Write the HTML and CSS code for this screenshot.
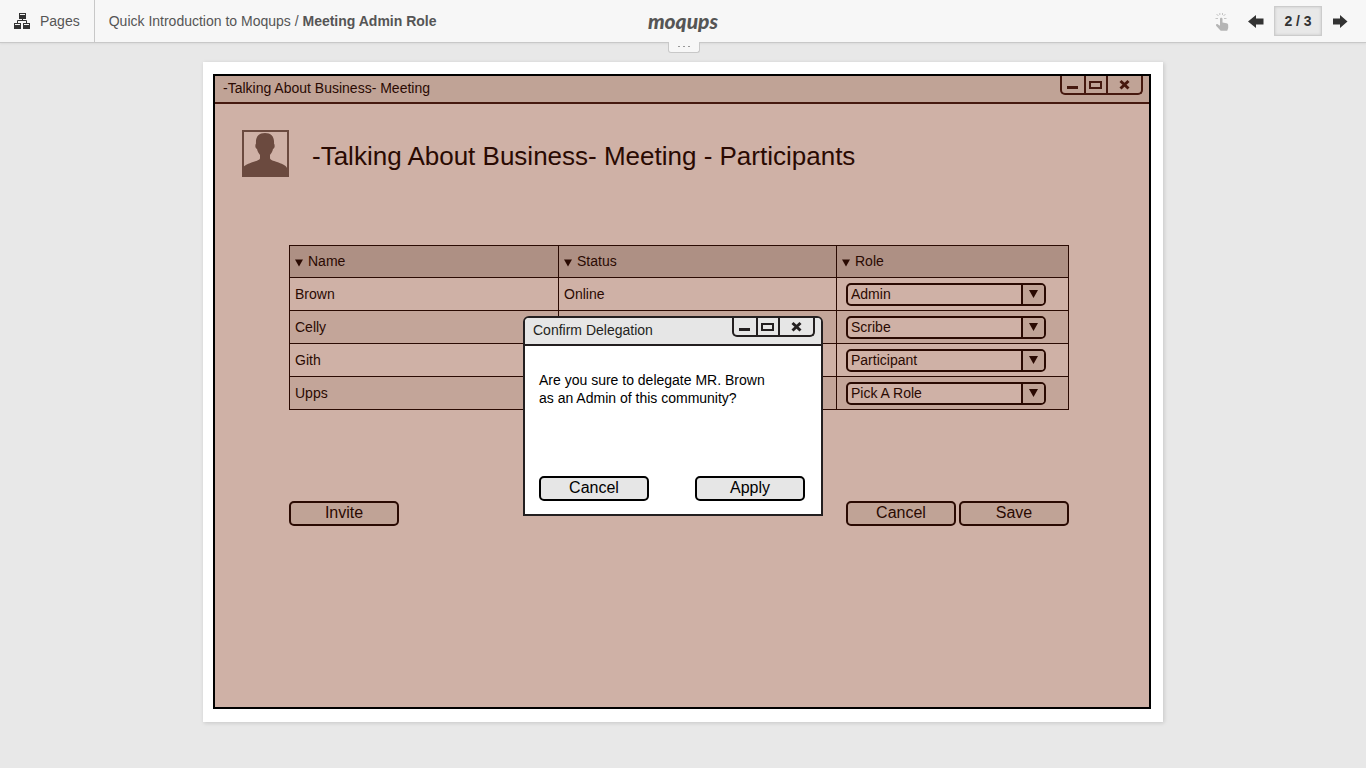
FILE: index.html
```html
<!DOCTYPE html>
<html lang="en">
<head>
<meta charset="utf-8">
<title>Meeting Admin Role</title>
<link rel="stylesheet" href="styles.css">
</head>
<body>
<svg class="defs" aria-hidden="true">
  <symbol id="minimise" viewBox="0 0 22 17"><path d="M5 10h11v3H5z" fill="currentColor"/></symbol>
  <symbol id="maximise" viewBox="0 0 20 17"><path d="M4 6h11v6H4z" fill="none" stroke="currentColor" stroke-width="2"/></symbol>
  <symbol id="close" viewBox="0 0 33 17"><path d="M12.500 5l8 7.500M20.500 5l-8 7.500" fill="none" stroke="currentColor" stroke-width="3"/></symbol>
  <symbol id="down" viewBox="0 0 9 8"><path d="M0 0h9L4.500 8z" fill="currentColor"/></symbol>
</svg>

<header class="topbar">
  <div class="topbar-left">
    <button class="pages" type="button">
      <svg width="16" height="16" viewBox="0 0 16 16"><path d="M5 0h7v6H5zM0 10h7v6H0zM9 10h7v6H9z" fill="#333"/><path d="M6 1h5v1H6zM1 11h5v1H1zM10 11h5v1h-5z" fill="#f7f7f7"/><path d="M8.500 6v2M3.500 10V7.500h9V10" fill="none" stroke="#333"/></svg>
      Pages
    </button>
    <nav class="crumbs">Quick Introduction to Moqups / <strong>Meeting Admin Role</strong></nav>
  </div>
  <a class="logo" href="#">moqups</a>
  <div class="topbar-right">
    <button class="tool hotspots" type="button" aria-label="Show hotspots">
      <svg width="16" height="19" viewBox="0 0 16 19"><path d="M6 7c0-1.600 2.500-1.600 2.500 0v3.500l4 .8c1.200.3 1.700.8 1.700 2V16l-1 2.800H6.700L2.300 14c-1-1.500.4-2.600 1.700-1.600l2 1.400z" fill="#b5b5b5"/><path d="M1.500 6.500H4M10 6.500h2.500M2.500 2l2 2M11.500 2l-2 2M5.800 1v2M8.500 1v2" fill="none" stroke="#c4c4c4"/></svg>
    </button>
    <button class="tool" type="button" aria-label="Previous page">
      <svg width="16" height="14" viewBox="0 0 16 14"><path d="M0 7.500L8 1v3.500h7.500v6H8V14z" fill="#333"/></svg>
    </button>
    <button class="counter" type="button">2 / 3</button>
    <button class="tool" type="button" aria-label="Next page">
      <svg width="16" height="14" viewBox="0 0 16 14"><path d="M15.500 7.500L8 1v3.500H1v6h7V14z" fill="#333"/></svg>
    </button>
  </div>
  <button class="handle" type="button" aria-label="Toggle toolbar"><svg width="12" height="2" viewBox="0 0 12 2"><path d="M0 0h2v1H0zM5 0h2v1H5zM10 0h2v1h-2z" fill="#999"/></svg></button>
</header>

<main class="sheet">
  <section class="window">
    <div class="titlebar">
      <span>-Talking About Business- Meeting</span>
      <div class="controls">
        <button type="button" aria-label="Minimise"><svg width="22" height="17"><use href="#minimise"/></svg></button>
        <button type="button" aria-label="Maximise"><svg width="20" height="17"><use href="#maximise"/></svg></button>
        <button type="button" aria-label="Close"><svg width="33" height="17"><use href="#close"/></svg></button>
      </div>
    </div>
    <div class="content">
      <div class="heading">
        <svg class="avatar" width="47" height="47" viewBox="0 0 47 47"><path d="M1 1h45v45H1z" fill="none" stroke="#6b4a3f" stroke-width="2"/><path d="M1 47V38c1-3 6-4.500 10-6 4-1.300 7-2 7-4v-3c-1.500-2-2.500-3.500-3-6-2-1-2-4-1-5.500C13.500 6.500 17 3 23 3s9.500 3.500 9 10.500c1 1.500 1 4.500-1 5.500-.5 2.500-1.500 4-3 6v3c0 2 3 2.700 7 4 4 1.500 9 3 10 6v9z" fill="#6b4a3f"/></svg>
        <h1>-Talking About Business- Meeting - Participants</h1>
      </div>
      <div class="panel">
        <table class="people">
          <colgroup><col class="col-name"><col class="col-status"><col class="col-role"></colgroup>
          <thead>
            <tr>
              <th scope="col"><svg width="8" height="8"><use href="#down"/></svg>Name</th>
              <th scope="col"><svg width="8" height="8"><use href="#down"/></svg>Status</th>
              <th scope="col"><svg width="8" height="8"><use href="#down"/></svg>Role</th>
            </tr>
          </thead>
          <tbody>
            <tr><td>Brown</td><td>Online</td><td><label class="picker"><select aria-label="Role of Brown"><option>Admin</option></select><span class="picker-arrow"><svg width="9" height="8"><use href="#down"/></svg></span></label></td></tr>
            <tr><td>Celly</td><td></td><td><label class="picker"><select aria-label="Role of Celly"><option>Scribe</option></select><span class="picker-arrow"><svg width="9" height="8"><use href="#down"/></svg></span></label></td></tr>
            <tr><td>Gith</td><td></td><td><label class="picker"><select aria-label="Role of Gith"><option>Participant</option></select><span class="picker-arrow"><svg width="9" height="8"><use href="#down"/></svg></span></label></td></tr>
            <tr><td>Upps</td><td></td><td><label class="picker"><select aria-label="Role of Upps"><option>Pick A Role</option></select><span class="picker-arrow"><svg width="9" height="8"><use href="#down"/></svg></span></label></td></tr>
          </tbody>
        </table>
        <div class="actions">
          <button class="btn" type="button">Invite</button>
          <div class="actions-end">
            <button class="btn" type="button">Cancel</button>
            <button class="btn" type="button">Save</button>
          </div>
        </div>
      </div>
    </div>
  </section>

  <section class="dialog" role="dialog" aria-labelledby="dialog-title">
    <div class="titlebar">
      <span id="dialog-title">Confirm Delegation</span>
      <div class="controls">
        <button type="button" aria-label="Minimise"><svg width="22" height="17"><use href="#minimise"/></svg></button>
        <button type="button" aria-label="Maximise"><svg width="20" height="17"><use href="#maximise"/></svg></button>
        <button type="button" aria-label="Close"><svg width="33" height="17"><use href="#close"/></svg></button>
      </div>
    </div>
    <div class="dialog-body">
      <p>Are you sure to delegate MR. Brown<br>as an Admin of this community?</p>
      <div class="actions">
        <button class="btn" type="button">Cancel</button>
        <button class="btn" type="button">Apply</button>
      </div>
    </div>
  </section>
</main>
</body>
</html>
```
FILE: styles.css
```css
* { box-sizing: border-box; }

body {
  margin: 0;
  background: #e8e8e8;
  color: #555;
  font: 14px/18px "Liberation Sans", Arial, sans-serif;
}

button, select {
  margin: 0;
  padding: 0;
  border: 0;
  background: none;
  color: inherit;
  font: inherit;
}

svg { display: block; }
.defs { position: absolute; width: 0; height: 0; }

/* Top bar */
.topbar {
  position: relative;
  display: grid;
  grid-template-columns: 1fr auto 1fr;
  min-height: 43px;
  border-bottom: 1px solid #c8c8c8;
  background: #f7f7f7;
  box-shadow: 0 1px 2px rgba(0, 0, 0, 0.06);
}

.topbar-left, .topbar-right { display: flex; align-items: center; }
.topbar-right { justify-content: flex-end; gap: 10px; padding-right: 18px; }
.hotspots { margin-right: 8px; }

.pages {
  display: flex;
  align-items: center;
  align-self: stretch;
  gap: 10px;
  padding: 0 14px;
  border-right: 1px solid #c8c8c8;
}

.crumbs { padding-left: 14px; white-space: nowrap; }

.logo {
  align-self: center;
  color: #555;
  font: italic 900 21px/24px Lato, sans-serif;
  text-decoration: none;
}

.counter {
  width: 48px;
  height: 30px;
  border: 1px solid #ccc;
  background: #e8e8e8;
  box-shadow: inset 0 0 3px rgba(0, 0, 0, 0.15);
  color: #333;
  font-weight: bold;
}

.handle {
  position: absolute;
  top: 100%;
  left: 50%;
  display: grid;
  place-items: center;
  width: 32px;
  height: 11px;
  margin-left: -15px;
  border: 1px solid #c8c8c8;
  border-top: 0;
  border-radius: 0 0 3px 3px;
  background: #f7f7f7;
}

/* Page */
.sheet {
  position: relative;
  max-width: 960px;
  min-height: 660px;
  margin: 19px auto 46px;
  padding: 12px 12px 13px 10px;
  display: flex;
  background: #fff;
  box-shadow: 1px 1px 4px rgba(0, 0, 0, 0.15);
}

/* Windows */
.window {
  flex: 1;
  border: 2px solid #000;
  background: #cfb1a6;
  color: #2a0a02;
}

.titlebar {
  display: flex;
  justify-content: space-between;
  align-items: flex-start;
  min-height: 28px;
  padding: 0 6px 0 8px;
  border-bottom: 2px solid;
}

.titlebar span { padding-top: 3px; }
.window .titlebar { border-color: #46190f; background: #c0a396; }

.controls {
  display: flex;
  border: 2px solid;
  border-top: 0;
  border-radius: 0 0 5px 5px;
}

.controls button + button { border-left: 2px solid; }
.window .controls { color: #46190f; }

.content { padding: 26px 80px 26px 27px; }
.heading { display: flex; align-items: center; gap: 23px; }

h1 {
  margin: 0;
  padding-top: 5px;
  font-size: 26px;
  font-weight: normal;
  line-height: 32px;
}

.panel { padding: 68px 0 0 47px; }

/* Participants */
.people {
  width: 100%;
  border-collapse: collapse;
  table-layout: fixed;
}

.col-name { width: 269px; }
.col-status { width: 278px; }

.people th, .people td {
  height: 33px;
  padding: 0 5px;
  border: 1px solid #2a0a02;
  text-align: left;
}

.people th { height: 32px; padding-bottom: 2px; background: #ae9084; font-weight: normal; }
.people th svg { display: inline-block; margin-right: 5px; vertical-align: -1px; }
.people tbody tr:nth-child(even) { background: #c3a599; }
.people td:last-child { padding-left: 9px; }

.picker {
  display: grid;
  max-width: 200px;
  height: 23px;
  border: 2px solid #2a0a02;
  border-radius: 5px;
  background: #cfb1a6;
}

.picker select {
  grid-area: 1 / 1;
  width: 100%;
  padding-left: 3px;
  appearance: none;
}

.picker-arrow {
  grid-area: 1 / 1;
  justify-self: end;
  display: grid;
  place-items: center;
  width: 23px;
  border-left: 2px solid #2a0a02;
  border-radius: 0 3px 3px 0;
  background: #c0a396;
  pointer-events: none;
}

/* Buttons */
.actions { display: flex; justify-content: space-between; }
.panel .actions { padding-top: 91px; }
.actions-end { display: flex; gap: 3px; }

.btn {
  width: 110px;
  height: 25px;
  padding-bottom: 2px;
  border: 2px solid;
  border-radius: 5px;
  background: #c0a396;
  font-size: 16px;
}

/* Confirmation dialog */
.dialog {
  position: absolute;
  top: 254px;
  left: calc(50% - 160px);
  display: flex;
  flex-direction: column;
  width: 300px;
  min-height: 200px;
  border: 2px solid #231f20;
  border-radius: 6px 6px 0 0;
  background: #fff;
  color: #231f20;
}

.dialog .titlebar { border-radius: 4px 4px 0 0; background: #e6e6e6; }

.dialog-body {
  display: flex;
  flex: 1;
  flex-direction: column;
  justify-content: space-between;
  padding: 25px 16px 13px 14px;
  color: #000;
}

.dialog-body p { margin: 0; }
.dialog .btn { background: #e6e6e6; }
```
